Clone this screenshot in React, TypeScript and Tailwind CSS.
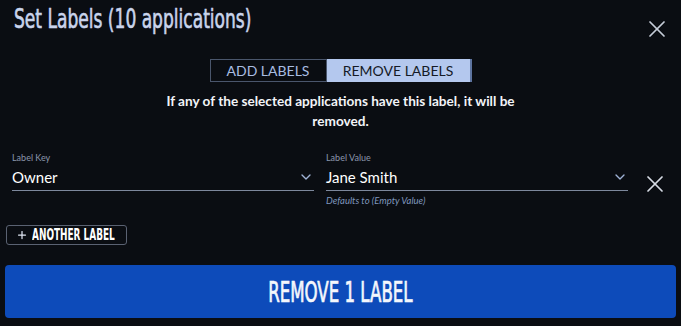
import { X, ChevronDown, Plus } from "lucide-react";

const lato = { fontFamily: "Lato, 'Open Sans', sans-serif" };

export default function App() {
  return (
    <div className="w-[681px] h-[326px] bg-[#0a0d12] text-white overflow-hidden" style={lato}>
      {/* header */}
      <div className="flex items-start justify-between pl-[14px] pr-[10px] h-[59px]">
        <h1 className="mt-[3px] [font-family:'DejaVu_Sans_Condensed','Liberation_Sans_Narrow',sans-serif] text-[26px] leading-[32px] text-[#c9d4ec] [-webkit-text-stroke:0.6px_#c9d4ec] origin-left scale-x-[0.73] whitespace-nowrap">
          Set Labels (10 applications)
        </h1>
        <button className="mt-[15px] text-[#c5ccd8]">
          <X size={28} strokeWidth={1.5} />
        </button>
      </div>

      {/* tabs */}
      <div className="flex justify-center">
        <div className="flex h-[23px] text-[14px] leading-none">
          <button className="w-[117px] border border-[#4a566c] text-[#a9bde2]">ADD LABELS</button>
          <button className="w-[145px] bg-[#b4c8ee] text-[#141a26] border-r-2 border-[#5d74a0]">REMOVE LABELS</button>
        </div>
      </div>
      <p className="mx-auto w-[370px] text-center text-[13.6px] font-bold leading-[20px] mt-[9px] text-[#f2f4f8]">
        If any of the selected applications have this label, it will be removed.
      </p>

      {/* label row */}
      <div className="flex items-start mt-[21px] pl-[12px]">
        <div className="w-[302px]">
          <div className="text-[9px] text-[#8a97ad] leading-[12px]">Label Key</div>
          <div className="flex items-center justify-between border-b border-[#7d889c] h-[27px]">
            <span className="text-[15px]">Owner</span>
            <ChevronDown size={16} className="text-[#9fb3d6]" strokeWidth={2} />
          </div>
        </div>
        <div className="w-[302px] ml-[12px]">
          <div className="text-[9px] text-[#8a97ad] leading-[12px]">Label Value</div>
          <div className="flex items-center justify-between border-b border-[#7d889c] h-[27px]">
            <span className="text-[15px]">Jane Smith</span>
            <ChevronDown size={16} className="text-[#9fb3d6]" strokeWidth={2} />
          </div>
          <div className="text-[9.5px] italic text-[#7f96bd] leading-[12px] mt-[4px]">Defaults to (Empty Value)</div>
        </div>
        <button className="ml-[13px] mt-[18px] text-[#d6dbe4]">
          <X size={28} strokeWidth={1.5} />
        </button>
      </div>

      {/* another label */}
      <div className="pl-[6px] mt-[18px]">
        <button className="flex items-center gap-[4px] h-[20px] w-[121px] pl-[9px] border border-[#5a6272] rounded-[3px] overflow-hidden">
          <Plus size={12} strokeWidth={2.5} className="shrink-0 text-[#dfe6f2]" />
          <span className="[font-family:'DejaVu_Sans_Condensed','Liberation_Sans_Narrow',sans-serif] font-bold text-[16px] leading-none origin-left scale-x-[0.62] whitespace-nowrap">
            ANOTHER LABEL
          </span>
        </button>
      </div>

      {/* submit */}
      <div className="px-[5px] mt-[20px]">
        <button className="w-full h-[53px] rounded-[4px] bg-[#0d4bba] flex items-center justify-center pt-[3px]">
          <span className="[font-family:'DejaVu_Sans_Condensed','Liberation_Sans_Narrow',sans-serif] text-[28px] leading-none [-webkit-text-stroke:0.7px_#f4f7fc] scale-x-[0.66] whitespace-nowrap text-[#f4f7fc]">
            REMOVE 1 LABEL
          </span>
        </button>
      </div>
    </div>
  );
}
